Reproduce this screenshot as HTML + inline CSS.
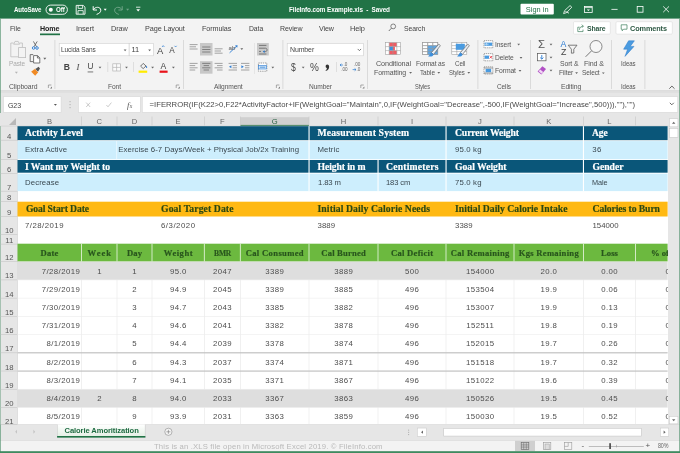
<!DOCTYPE html>
<html><head><meta charset="utf-8"><title>FileInfo.com Example.xls - Excel</title>
<style>
html,body{margin:0;padding:0;}
body{width:680px;height:453px;overflow:hidden;position:relative;background:#e6e6e6;font-family:'Liberation Sans', sans-serif;}
#w{position:absolute;left:0;top:0;width:680px;height:453px;overflow:hidden;will-change:transform;}
#w div,#w span,#w svg{position:absolute;display:block;}
#w span{white-space:pre;}
#w svg{overflow:visible;}
</style></head><body><div id="w">
<svg style="left:0;top:0" width="680" height="453" viewBox="0 0 680 453" shape-rendering="geometricPrecision"><defs><linearGradient id="g0" x1="0" y1="0" x2="0" y2="1"><stop offset="0" stop-color="#ffffff"/><stop offset="1" stop-color="#e2eee3"/></linearGradient></defs>
<rect x="0.00" y="0.00" width="680.00" height="19.20" fill="#217346"/>
<rect x="520.50" y="3.80" width="33.30" height="10.80" fill="#fff" rx="1.0"/>
<rect x="0.00" y="18.60" width="680.00" height="72.00" fill="#f3f3f3"/>
<rect x="0.00" y="90.20" width="680.00" height="1.20" fill="#d9d9d9"/>
<rect x="0.00" y="91.40" width="680.00" height="1.40" fill="#dedede"/>
<rect x="40.00" y="33.50" width="20.00" height="1.70" fill="#217346"/>
<rect x="573.50" y="21.70" width="36.80" height="12.40" fill="#fff" stroke="#dcdcdc" stroke-width="0.60" rx="1.0"/>
<rect x="616.00" y="21.70" width="56.30" height="12.40" fill="#fff" stroke="#dcdcdc" stroke-width="0.60" rx="1.0"/>
<rect x="54.50" y="40.00" width="0.80" height="49.00" fill="#d4d4d4"/>
<rect x="183.00" y="40.00" width="0.80" height="49.00" fill="#d4d4d4"/>
<rect x="282.50" y="40.00" width="0.80" height="49.00" fill="#d4d4d4"/>
<rect x="367.00" y="40.00" width="0.80" height="49.00" fill="#d4d4d4"/>
<rect x="477.50" y="40.00" width="0.80" height="49.00" fill="#d4d4d4"/>
<rect x="530.00" y="40.00" width="0.80" height="49.00" fill="#d4d4d4"/>
<rect x="611.00" y="40.00" width="0.80" height="49.00" fill="#d4d4d4"/>
<rect x="644.50" y="40.00" width="0.80" height="49.00" fill="#d4d4d4"/>
<rect x="107.50" y="62.00" width="0.70" height="10.00" fill="#d4d4d4"/>
<rect x="133.00" y="62.00" width="0.70" height="10.00" fill="#d4d4d4"/>
<rect x="336.00" y="62.00" width="0.70" height="10.00" fill="#d4d4d4"/>
<rect x="254.20" y="43.00" width="0.70" height="31.00" fill="#dedede"/>
<rect x="59.20" y="43.50" width="69.90" height="12.30" fill="#fff" stroke="#d0d0d0" stroke-width="0.60"/>
<rect x="129.20" y="43.50" width="24.10" height="12.30" fill="#fff" stroke="#d0d0d0" stroke-width="0.60"/>
<rect x="87.60" y="71.60" width="5.60" height="0.70" fill="#444"/>
<rect x="159.60" y="70.60" width="8.00" height="2.20" fill="#e8121a"/>
<rect x="138.60" y="70.60" width="8.60" height="2.20" fill="#ffeb00"/>
<rect x="200.00" y="43.00" width="12.50" height="12.50" fill="#c8c8c8"/>
<rect x="200.00" y="61.20" width="12.50" height="12.50" fill="#c8c8c8"/>
<rect x="257.00" y="43.00" width="11.80" height="12.50" fill="#c8c8c8"/>
<rect x="287.20" y="43.50" width="76.10" height="12.30" fill="#fff" stroke="#d0d0d0" stroke-width="0.60"/>
<rect x="0.00" y="92.80" width="680.00" height="22.00" fill="#e6e6e6"/>
<rect x="3.55" y="96.75" width="57.50" height="15.50" fill="#fff" stroke="#d4d4d4" stroke-width="0.50"/>
<rect x="78.55" y="96.75" width="61.70" height="15.50" fill="#fff" stroke="#d4d4d4" stroke-width="0.50"/>
<rect x="142.25" y="96.75" width="535.50" height="15.50" fill="#fff" stroke="#d4d4d4" stroke-width="0.50"/>
<rect x="69.60" y="101.00" width="0.90" height="1.20" fill="#aaa"/>
<rect x="69.60" y="104.00" width="0.90" height="1.20" fill="#aaa"/>
<rect x="69.60" y="107.00" width="0.90" height="1.20" fill="#aaa"/>
<rect x="0.00" y="424.30" width="680.00" height="16.40" fill="#e6e6e6"/>
<rect x="0.00" y="424.30" width="680.00" height="0.60" fill="#c9c9c9"/>
<rect x="0.00" y="440.70" width="680.00" height="10.80" fill="#f3f3f3"/>
<rect x="0.00" y="440.50" width="680.00" height="0.50" fill="#d6d6d6"/>
<rect x="57.10" y="424.30" width="88.30" height="13.20" fill="#c8c8c8"/>
<rect x="57.60" y="424.30" width="87.30" height="13.20" fill="url(#g0)"/>
<rect x="57.10" y="436.00" width="88.30" height="1.60" fill="#217346"/>
<rect x="515.00" y="440.80" width="20.00" height="10.60" fill="#cfcfcf"/>
<rect x="588.80" y="446.00" width="55.00" height="0.60" fill="#999"/>
<rect x="609.20" y="443.20" width="1.80" height="5.80" fill="#555"/>
<rect x="616.40" y="444.80" width="0.60" height="2.60" fill="#999"/>
<rect x="417.25" y="428.05" width="9.00" height="8.30" fill="#fff" stroke="#c6c6c6" stroke-width="0.50"/>
<rect x="660.25" y="428.05" width="8.50" height="8.30" fill="#fff" stroke="#c6c6c6" stroke-width="0.50"/>
<rect x="443.75" y="428.35" width="197.50" height="7.70" fill="#fff" stroke="#c0c0c0" stroke-width="0.50"/>
<rect x="408.20" y="429.60" width="0.90" height="1.10" fill="#aaa"/>
<rect x="408.20" y="431.80" width="0.90" height="1.10" fill="#aaa"/>
<rect x="408.20" y="434.00" width="0.90" height="1.10" fill="#aaa"/>
<rect x="668.00" y="113.00" width="12.00" height="311.30" fill="#e6e6e6"/>
<rect x="669.45" y="118.75" width="8.50" height="8.10" fill="#fff" stroke="#c6c6c6" stroke-width="0.50"/>
<rect x="669.45" y="128.35" width="8.50" height="9.10" fill="#fff" stroke="#c0c0c0" stroke-width="0.50"/>
<rect x="669.45" y="416.35" width="8.50" height="7.50" fill="#fff" stroke="#c6c6c6" stroke-width="0.50"/>
<rect x="0.00" y="18.50" width="0.70" height="434.50" fill="#5f9a79"/>
<rect x="679.30" y="18.50" width="0.70" height="434.50" fill="#5f9a79"/>
<rect x="0.00" y="451.20" width="680.00" height="1.80" fill="#3f8a60"/>
<rect x="17.30" y="126.00" width="650.70" height="298.30" fill="#fff"/>
<rect x="0.00" y="113.00" width="668.00" height="13.00" fill="#e6e6e6"/>
<rect x="240.30" y="117.20" width="68.70" height="8.80" fill="#d0d0d0"/>
<rect x="240.30" y="124.90" width="68.70" height="1.20" fill="#3c8059"/>
<rect x="81.30" y="116.50" width="0.60" height="9.00" fill="#c6c6c6"/>
<rect x="116.70" y="116.50" width="0.60" height="9.00" fill="#c6c6c6"/>
<rect x="151.70" y="116.50" width="0.60" height="9.00" fill="#c6c6c6"/>
<rect x="204.00" y="116.50" width="0.60" height="9.00" fill="#c6c6c6"/>
<rect x="240.00" y="116.50" width="0.60" height="9.00" fill="#c6c6c6"/>
<rect x="308.70" y="116.50" width="0.60" height="9.00" fill="#c6c6c6"/>
<rect x="377.70" y="116.50" width="0.60" height="9.00" fill="#c6c6c6"/>
<rect x="445.70" y="116.50" width="0.60" height="9.00" fill="#c6c6c6"/>
<rect x="513.70" y="116.50" width="0.60" height="9.00" fill="#c6c6c6"/>
<rect x="583.10" y="116.50" width="0.60" height="9.00" fill="#c6c6c6"/>
<rect x="635.20" y="116.50" width="0.60" height="9.00" fill="#c6c6c6"/>
<rect x="0.70" y="126.00" width="16.60" height="298.30" fill="#e6e6e6"/>
<rect x="17.00" y="126.00" width="0.50" height="298.30" fill="#c9c9c9"/>
<rect x="0.70" y="125.80" width="668.00" height="0.50" fill="#c9c9c9"/>
<rect x="0.70" y="139.90" width="16.60" height="0.60" fill="#c6c6c6"/>
<rect x="0.70" y="159.30" width="16.60" height="0.60" fill="#c6c6c6"/>
<rect x="0.70" y="173.30" width="16.60" height="0.60" fill="#c6c6c6"/>
<rect x="0.70" y="190.90" width="16.60" height="0.60" fill="#c6c6c6"/>
<rect x="0.70" y="201.30" width="16.60" height="0.60" fill="#c6c6c6"/>
<rect x="0.70" y="216.10" width="16.60" height="0.60" fill="#c6c6c6"/>
<rect x="0.70" y="234.40" width="16.60" height="0.60" fill="#c6c6c6"/>
<rect x="0.70" y="243.80" width="16.60" height="0.60" fill="#c6c6c6"/>
<rect x="0.70" y="261.40" width="16.60" height="0.60" fill="#c6c6c6"/>
<rect x="0.70" y="279.62" width="16.60" height="0.60" fill="#c6c6c6"/>
<rect x="0.70" y="297.84" width="16.60" height="0.60" fill="#c6c6c6"/>
<rect x="0.70" y="316.06" width="16.60" height="0.60" fill="#c6c6c6"/>
<rect x="0.70" y="334.28" width="16.60" height="0.60" fill="#c6c6c6"/>
<rect x="0.70" y="352.50" width="16.60" height="0.60" fill="#c6c6c6"/>
<rect x="0.70" y="370.72" width="16.60" height="0.60" fill="#c6c6c6"/>
<rect x="0.70" y="388.94" width="16.60" height="0.60" fill="#c6c6c6"/>
<rect x="0.70" y="407.16" width="16.60" height="0.60" fill="#c6c6c6"/>
<rect x="0.70" y="424.00" width="16.60" height="0.60" fill="#c6c6c6"/>
<rect x="81.30" y="261.70" width="0.60" height="162.60" fill="#e6e6e6"/>
<rect x="116.70" y="261.70" width="0.60" height="162.60" fill="#e6e6e6"/>
<rect x="151.70" y="261.70" width="0.60" height="162.60" fill="#e6e6e6"/>
<rect x="204.00" y="261.70" width="0.60" height="162.60" fill="#e6e6e6"/>
<rect x="240.00" y="261.70" width="0.60" height="162.60" fill="#e6e6e6"/>
<rect x="308.70" y="261.70" width="0.60" height="162.60" fill="#e6e6e6"/>
<rect x="377.70" y="261.70" width="0.60" height="162.60" fill="#e6e6e6"/>
<rect x="445.70" y="261.70" width="0.60" height="162.60" fill="#e6e6e6"/>
<rect x="513.70" y="261.70" width="0.60" height="162.60" fill="#e6e6e6"/>
<rect x="583.10" y="261.70" width="0.60" height="162.60" fill="#e6e6e6"/>
<rect x="635.20" y="261.70" width="0.60" height="162.60" fill="#e6e6e6"/>
<rect x="17.50" y="126.20" width="650.10" height="14.00" fill="#0a5679"/>
<rect x="17.50" y="141.10" width="650.10" height="18.10" fill="#cdeefd"/>
<rect x="17.50" y="160.00" width="650.10" height="12.70" fill="#0a5679"/>
<rect x="17.50" y="173.70" width="650.10" height="17.40" fill="#cdeefd"/>
<rect x="17.50" y="201.70" width="650.10" height="14.80" fill="#ffb913"/>
<rect x="17.50" y="243.70" width="650.10" height="17.80" fill="#6cb93f"/>
<rect x="17.50" y="261.70" width="650.10" height="18.22" fill="#dedede"/>
<rect x="17.50" y="389.24" width="650.10" height="18.22" fill="#dedede"/>
<rect x="308.50" y="126.20" width="1.10" height="65.00" fill="#fff"/>
<rect x="445.50" y="126.20" width="1.10" height="65.00" fill="#fff"/>
<rect x="582.90" y="126.20" width="1.10" height="65.00" fill="#fff"/>
<rect x="377.50" y="159.60" width="1.10" height="31.60" fill="#fff"/>
<rect x="116.20" y="141.10" width="0.90" height="18.10" fill="#eaf8ff"/>
<rect x="81.20" y="243.70" width="0.80" height="17.80" fill="#eef7e8"/>
<rect x="116.60" y="243.70" width="0.80" height="17.80" fill="#eef7e8"/>
<rect x="151.60" y="243.70" width="0.80" height="17.80" fill="#eef7e8"/>
<rect x="203.90" y="243.70" width="0.80" height="17.80" fill="#eef7e8"/>
<rect x="239.90" y="243.70" width="0.80" height="17.80" fill="#eef7e8"/>
<rect x="308.60" y="243.70" width="0.80" height="17.80" fill="#eef7e8"/>
<rect x="377.60" y="243.70" width="0.80" height="17.80" fill="#eef7e8"/>
<rect x="445.60" y="243.70" width="0.80" height="17.80" fill="#eef7e8"/>
<rect x="513.60" y="243.70" width="0.80" height="17.80" fill="#eef7e8"/>
<rect x="583.00" y="243.70" width="0.80" height="17.80" fill="#eef7e8"/>
<rect x="635.10" y="243.70" width="0.80" height="17.80" fill="#eef7e8"/>
<rect x="17.50" y="279.62" width="650.10" height="0.60" fill="#ececec"/>
<rect x="17.50" y="297.84" width="650.10" height="0.60" fill="#ececec"/>
<rect x="17.50" y="316.06" width="650.10" height="0.60" fill="#ececec"/>
<rect x="17.50" y="334.28" width="650.10" height="0.60" fill="#ececec"/>
<rect x="17.50" y="352.50" width="650.10" height="0.60" fill="#ececec"/>
<rect x="17.50" y="370.72" width="650.10" height="0.60" fill="#ececec"/>
<rect x="17.50" y="388.94" width="650.10" height="0.60" fill="#ececec"/>
<rect x="17.50" y="407.16" width="650.10" height="0.60" fill="#ececec"/>
<rect x="17.50" y="352.40" width="650.10" height="0.90" fill="#b4b4b4"/>
<rect x="17.50" y="370.62" width="650.10" height="0.90" fill="#b4b4b4"/>
</svg>
<svg style="left:9px;top:117.5px;" width="7" height="7" viewBox="0 0 7 7"><path d="M7 0 L7 7 L0 7 Z" fill="#b8b8b8"/></svg>
<svg style="left:0;top:0;" width="680" height="453" viewBox="0 0 680 453"><rect x="46" y="5.1" width="21.4" height="9.2" rx="4.6" fill="none" stroke="#fff" stroke-width="0.9"/><circle cx="50.8" cy="9.7" r="2" fill="#fff"/><path d="M76.2 5.4 H83.2 L85 7.2 V14.2 H76.2 Z" fill="none" stroke="#fff" stroke-width="0.9"/><path d="M78.2 5.6 V8.4 H82.6 V5.6 M78 14 V10.6 H83.2 V14" fill="none" stroke="#fff" stroke-width="0.8"/><path d="M93.2 6.2 V10 H97 M93.4 9.8 C95 6.4 100.6 6.4 100.8 10.2 C100.8 12.4 99 13.6 96.6 14.4" fill="none" stroke="#fff" stroke-width="1"/><path d="M103.7 8.85 L106.7 8.85 L105.2 10.649999999999999 Z" fill="#fff"/><path d="M122.2 6.2 V10 H118.4 M122 9.8 C120.4 6.4 114.8 6.4 114.6 10.2 C114.6 12.4 116.4 13.6 118.8 14.4" fill="none" stroke="#6fa487" stroke-width="1"/><path d="M126.1 8.85 L129.1 8.85 L127.6 10.649999999999999 Z" fill="#6fa487"/><path d="M136 7.2 H140.4" stroke="#fff" stroke-width="0.8"/><path d="M136.29999999999998 9.25 L140.1 9.25 L138.2 11.53 Z" fill="#fff"/><path d="M563.6 13.6 L564.6 10.6 L570 5.6 L571.8 7.2 L566.6 12.6 Z M565.4 11.4 L569 13.2" fill="none" stroke="#fff" stroke-width="0.8"/><rect x="584.6" y="6.4" width="7.6" height="6" fill="none" stroke="#fff" stroke-width="0.8"/><path d="M584.6 7.6 H592.2" stroke="#fff" stroke-width="0.8"/><path d="M586.8 9.4 L588.4 11 L590 9.4 Z" fill="#fff"/><path d="M611.4 9.4 H617.6" stroke="#fff" stroke-width="0.8"/><rect x="637.2" y="6.4" width="5.8" height="5.8" fill="none" stroke="#fff" stroke-width="0.8"/><path d="M663.2 6.4 L669 12.2 M669 6.4 L663.2 12.2" stroke="#fff" stroke-width="0.8"/><circle cx="393.2" cy="26.4" r="2.4" fill="none" stroke="#555" stroke-width="0.7"/><path d="M391.4 28.2 L388.8 31" stroke="#555" stroke-width="0.8"/><path d="M579.6 27.2 H577.8 V31.6 H583 V29.6" fill="none" stroke="#3b7d5a" stroke-width="0.7"/><path d="M579.4 29.8 C579.6 27.4 581 26.2 583.2 26.2 M581.8 24.6 L583.4 26.2 L581.8 27.8" fill="none" stroke="#3b7d5a" stroke-width="0.7"/><path d="M621.2 24.8 H627 V29.2 H623.6 L622.2 30.8 V29.2 H621.2 Z" fill="none" stroke="#3b7d5a" stroke-width="0.7"/><path d="M13.4 43 H10.8 V56.8 H18.4 M19.8 43 H22.4 V47.4" fill="none" stroke="#bdbdbd" stroke-width="0.8"/><path d="M13.6 44.2 L15 41.4 H18.2 L19.6 44.2 Z" fill="none" stroke="#bdbdbd" stroke-width="0.8"/><rect x="18.6" y="47.6" width="7" height="10" fill="#f3f3f3" stroke="#bdbdbd" stroke-width="0.8"/><path d="M14.899999999999999 71.85 L17.9 71.85 L16.4 73.64999999999999 Z" fill="#b5b5b5"/><path d="M33.4 41.4 L36.6 46.8 M37.2 41.4 L34 46.8" stroke="#555" stroke-width="0.8" fill="none"/><circle cx="33.6" cy="48" r="1.3" fill="none" stroke="#2b7cd3" stroke-width="0.9"/><circle cx="37" cy="48" r="1.3" fill="none" stroke="#2b7cd3" stroke-width="0.9"/><path d="M33.2 54.6 H30.2 V61.6 H33.2" fill="none" stroke="#555" stroke-width="0.8"/><path d="M33.6 55.6 H37.6 L39.8 57.8 V63 H33.6 Z M37.4 55.8 V58 H39.6" fill="#fff" stroke="#555" stroke-width="0.8"/><path d="M43.3 57.85 L46.3 57.85 L44.8 59.65 Z" fill="#666"/><path d="M31 71.4 L35 68.6 L38.2 72.2 L35.2 75.8 Z" fill="#f08a24"/><path d="M31 71.4 L35 68.6 L38.2 72.2" fill="none" stroke="#fff" stroke-width="0.5"/><path d="M35.4 69 L38.6 66.8 L40 68.4 L38 71.8 Z" fill="#555"/><path d="M48.4 88 L48.4 85 L51.4 85" stroke="#777" stroke-width="0.6" fill="none"/><path d="M52.0 86.6 L52.0 88.6 L50.0 88.6 Z" fill="#777"/><path d="M123.69999999999999 49.5 L126.5 49.5 L125.1 51.18 Z" fill="#666"/><path d="M148.2 49.5 L151.0 49.5 L149.6 51.18 Z" fill="#666"/><path d="M162 47 L163.2 45.6 L164.4 47" fill="none" stroke="#2b7cd3" stroke-width="0.7"/><path d="M174.6 45.8 L175.6 47 L176.6 45.8" fill="none" stroke="#2b7cd3" stroke-width="0.7"/><path d="M98.6 66.7 L101.4 66.7 L100 68.38000000000001 Z" fill="#666"/><rect x="112.8" y="63.8" width="7.6" height="7.2" fill="#fbfbfb" stroke="#b5b5b5" stroke-width="0.7"/><path d="M116.6 63.8 V71 M112.8 67.4 H120.4" stroke="#b5b5b5" stroke-width="0.7"/><path d="M125.1 66.7 L127.9 66.7 L126.5 68.38000000000001 Z" fill="#666"/><path d="M140.6 66.2 L143.2 63.4 L146 66 L143.2 68.6 Z" fill="#f3f3f3" stroke="#555" stroke-width="0.8"/><path d="M146.4 65.4 C147.4 66.8 147.4 67.8 146.6 68 C145.8 67.8 145.8 66.8 146.4 65.4 Z" fill="#2b7cd3"/><path d="M151.2 66.7 L154.0 66.7 L152.6 68.38000000000001 Z" fill="#666"/><path d="M172.0 66.7 L174.8 66.7 L173.4 68.38000000000001 Z" fill="#666"/><path d="M176.2 88 L176.2 85 L179.2 85" stroke="#777" stroke-width="0.6" fill="none"/><path d="M179.79999999999998 86.6 L179.79999999999998 88.6 L177.79999999999998 88.6 Z" fill="#777"/><path d="M189.6 44.6 H197.6" stroke="#707070" stroke-width="0.62"/><path d="M189.6 46.8 H196" stroke="#707070" stroke-width="0.62"/><path d="M189.6 49.0 H197.6" stroke="#707070" stroke-width="0.62"/><path d="M202.2 47 H210.4" stroke="#555" stroke-width="0.62"/><path d="M202.2 49.5 H210.4" stroke="#555" stroke-width="0.62"/><path d="M202.2 52 H210.4" stroke="#555" stroke-width="0.62"/><path d="M214.6 48.8 H222.6" stroke="#707070" stroke-width="0.62"/><path d="M214.6 51 H221" stroke="#707070" stroke-width="0.62"/><path d="M214.6 53.2 H222.6" stroke="#707070" stroke-width="0.62"/><path d="M189.6 63.4 H197.6" stroke="#707070" stroke-width="0.62"/><path d="M189.6 65.6 H195.2" stroke="#707070" stroke-width="0.62"/><path d="M189.6 67.8 H197.6" stroke="#707070" stroke-width="0.62"/><path d="M189.6 70 H195.2" stroke="#707070" stroke-width="0.62"/><path d="M202.2 63.4 H210.4" stroke="#555" stroke-width="0.62"/><path d="M203.6 65.6 H209" stroke="#555" stroke-width="0.62"/><path d="M202.2 67.8 H210.4" stroke="#555" stroke-width="0.62"/><path d="M203.6 70 H209" stroke="#555" stroke-width="0.62"/><path d="M214.6 63.4 H222.6" stroke="#707070" stroke-width="0.62"/><path d="M217 65.6 H222.6" stroke="#707070" stroke-width="0.62"/><path d="M214.6 67.8 H222.6" stroke="#707070" stroke-width="0.62"/><path d="M217 70 H222.6" stroke="#707070" stroke-width="0.62"/><path d="M229.6 52.8 L236.8 46" stroke="#2b7cd3" stroke-width="0.9"/><path d="M235 45.4 L237.6 45.2 L237.2 47.8 Z" fill="#2b7cd3"/><path d="M240.4 48.3 L243.20000000000002 48.3 L241.8 49.98 Z" fill="#666"/><path d="M228.6 63.4 H237.0" stroke="#707070" stroke-width="0.62"/><path d="M232.6 65.6 H237.0" stroke="#707070" stroke-width="0.62"/><path d="M232.6 67.8 H237.0" stroke="#707070" stroke-width="0.62"/><path d="M228.6 70 H237.0" stroke="#707070" stroke-width="0.62"/><path d="M241 63.4 H249.4" stroke="#707070" stroke-width="0.62"/><path d="M245 65.6 H249.4" stroke="#707070" stroke-width="0.62"/><path d="M245 67.8 H249.4" stroke="#707070" stroke-width="0.62"/><path d="M241 70 H249.4" stroke="#707070" stroke-width="0.62"/><path d="M231.4 65.2 L229 66.7 L231.4 68.2 Z" fill="#2b7cd3"/><path d="M241.4 65.2 L243.8 66.7 L241.4 68.2 Z" fill="#2b7cd3"/><path d="M259 45.4 H266.4 M259 48.2 H265.4 C267.6 48.2 267.6 51.6 265.4 51.6 H263.4 M259 51.4 H261 M259 54 H266.4" stroke="#555" stroke-width="0.7" fill="none"/><path d="M264.6 50.2 L262.8 51.6 L264.6 53 Z" fill="#2b7cd3"/><rect x="258.4" y="63" width="8.4" height="8.2" fill="#fff" stroke="#777" stroke-width="0.7" stroke-dasharray="1.4 0.8"/><rect x="258.6" y="65.4" width="8" height="3.6" fill="#cfe3f7" stroke="#2b7cd3" stroke-width="0.6"/><path d="M260 67.2 H265.2" stroke="#2b7cd3" stroke-width="0.7"/><path d="M271.40000000000003 66.7 L274.2 66.7 L272.8 68.38000000000001 Z" fill="#666"/><path d="M276.4 88 L276.4 85 L279.4 85" stroke="#777" stroke-width="0.6" fill="none"/><path d="M280.0 86.6 L280.0 88.6 L278.0 88.6 Z" fill="#777"/><path d="M357.7 48.949999999999996 L359.4 50.65 L361.09999999999997 48.949999999999996" stroke="#555" stroke-width="0.8" fill="none"/><path d="M301.8 66.7 L304.59999999999997 66.7 L303.2 68.38000000000001 Z" fill="#666"/><path d="M343 65 H340 M341.4 63.8 L340 65 L341.4 66.2" stroke="#2b7cd3" stroke-width="0.7" fill="none"/><path d="M352.6 69.6 H356 M354.6 68.4 L356 69.6 L354.6 70.8" stroke="#2b7cd3" stroke-width="0.7" fill="none"/><path d="M360.8 88 L360.8 85 L363.8 85" stroke="#777" stroke-width="0.6" fill="none"/><path d="M364.40000000000003 86.6 L364.40000000000003 88.6 L362.40000000000003 88.6 Z" fill="#777"/><path d="M327.3 64.6 C329.4 64.6 329.6 67.6 328.6 69 C327.8 70.2 326.6 70.9 325.2 71.1 C326.4 70.2 326.9 69.2 326.9 68.1 C325.2 68 325.2 64.6 327.3 64.6 Z" fill="#333"/><rect x="385.4" y="42.6" width="15.2" height="12" fill="#fff"/><rect x="389.2" y="42.6" width="7.6" height="4.0" fill="#ef5b63"/><rect x="389.2" y="50.6" width="7.6" height="4.0" fill="#ef5b63"/><rect x="389.2" y="46.6" width="3.8" height="4.0" fill="#3d8fdc"/><rect x="393.0" y="46.6" width="1.9" height="4.0" fill="#ef5b63"/><rect x="385.4" y="42.6" width="15.2" height="12" fill="none" stroke="#9a9a9a" stroke-width="0.55"/><path d="M389.20 42.6 V54.6" stroke="#9a9a9a" stroke-width="0.55"/><path d="M393.00 42.6 V54.6" stroke="#9a9a9a" stroke-width="0.55"/><path d="M396.80 42.6 V54.6" stroke="#9a9a9a" stroke-width="0.55"/><path d="M385.4 46.60 H400.59999999999997" stroke="#9a9a9a" stroke-width="0.55"/><path d="M385.4 50.60 H400.59999999999997" stroke="#9a9a9a" stroke-width="0.55"/><rect x="422.6" y="42.6" width="15.2" height="12" fill="#fff" stroke="#9a9a9a" stroke-width="0.55"/><path d="M427.67 42.6 V54.6" stroke="#9a9a9a" stroke-width="0.55"/><path d="M432.73 42.6 V54.6" stroke="#9a9a9a" stroke-width="0.55"/><path d="M422.6 45.60 H437.8" stroke="#9a9a9a" stroke-width="0.55"/><path d="M422.6 48.60 H437.8" stroke="#9a9a9a" stroke-width="0.55"/><path d="M422.6 51.60 H437.8" stroke="#9a9a9a" stroke-width="0.55"/><rect x="427.6666666666667" y="45.6" width="10.133333333333333" height="9.0" fill="#4a9be0" opacity="0.9"/><rect x="422.6" y="42.6" width="15.2" height="12" fill="none" stroke="#9a9a9a" stroke-width="0.55"/><path d="M427.67 42.6 V54.6" stroke="#9a9a9a" stroke-width="0.55"/><path d="M432.73 42.6 V54.6" stroke="#9a9a9a" stroke-width="0.55"/><path d="M422.6 45.60 H437.8" stroke="#9a9a9a" stroke-width="0.55"/><path d="M422.6 48.60 H437.8" stroke="#9a9a9a" stroke-width="0.55"/><path d="M422.6 51.60 H437.8" stroke="#9a9a9a" stroke-width="0.55"/><path d="M431.4 52.6 L438.79999999999995 44.2 L440.4 45.6 L433.59999999999997 54.4 Z" fill="#e8eef5" stroke="#555" stroke-width="0.6"/><path d="M428.0 56.2 C429.79999999999995 55.800000000000004 429.79999999999995 53.2 431.4 52.6 L433.59999999999997 54.4 C432.79999999999995 56.800000000000004 429.79999999999995 57.0 428.0 56.2 Z" fill="#3d8fdc"/><rect x="451.8" y="42.6" width="15" height="12" fill="#fff" stroke="#9a9a9a" stroke-width="0.55"/><path d="M456.80 42.6 V54.6" stroke="#9a9a9a" stroke-width="0.55"/><path d="M461.80 42.6 V54.6" stroke="#9a9a9a" stroke-width="0.55"/><path d="M451.8 45.60 H466.8" stroke="#9a9a9a" stroke-width="0.55"/><path d="M451.8 48.60 H466.8" stroke="#9a9a9a" stroke-width="0.55"/><path d="M451.8 51.60 H466.8" stroke="#9a9a9a" stroke-width="0.55"/><rect x="455.8" y="43.800000000000004" width="9.0" height="6.0" fill="#4a9be0"/><path d="M460.4 52.6 L467.79999999999995 44.2 L469.4 45.6 L462.59999999999997 54.4 Z" fill="#e8eef5" stroke="#555" stroke-width="0.6"/><path d="M457.0 56.2 C458.79999999999995 55.800000000000004 458.79999999999995 53.2 460.4 52.6 L462.59999999999997 54.4 C461.79999999999995 56.800000000000004 458.79999999999995 57.0 457.0 56.2 Z" fill="#3d8fdc"/><path d="M409.20000000000005 72.1 L412.0 72.1 L410.6 73.78 Z" fill="#666"/><path d="M437.40000000000003 72.1 L440.2 72.1 L438.8 73.78 Z" fill="#666"/><path d="M467.40000000000003 72.1 L470.2 72.1 L468.8 73.78 Z" fill="#666"/><rect x="484" y="40.6" width="8.8" height="7.2" fill="#fff" stroke="#666" stroke-width="0.6" stroke-dasharray="1.2 0.7"/><rect x="484.6" y="42.6" width="7.6" height="3.2" fill="#4a9be0"/><path d="M488.6 44.2 H485.6 M486.8 43.2 L485.6 44.2 L486.8 45.2" stroke="#fff" stroke-width="0.6" fill="none"/><rect x="484" y="53.6" width="8.8" height="7.2" fill="#fff" stroke="#666" stroke-width="0.6" stroke-dasharray="1.2 0.7"/><rect x="484.6" y="55.6" width="4.4" height="3.2" fill="#4a9be0"/><path d="M489.6 56.0 L492 58.4 M492 56.0 L489.6 58.4" stroke="#e8323c" stroke-width="0.8"/><rect x="484" y="66.8" width="8.8" height="7.2" fill="#fff" stroke="#666" stroke-width="0.6" stroke-dasharray="1.2 0.7"/><rect x="485.6" y="68.8" width="5.6" height="3.4" fill="#4a9be0"/><path d="M484 68.0 H492.8 M484 73.0 H492.8" stroke="#555" stroke-width="0.6"/><path d="M517.3000000000001 43.8 L520.1 43.8 L518.7 45.48 Z" fill="#666"/><path d="M519.6 57.0 L522.4 57.0 L521 58.68 Z" fill="#666"/><path d="M518.6 70.1 L521.4 70.1 L520 71.78 Z" fill="#666"/><path d="M549.6 43.8 L552.4 43.8 L551 45.48 Z" fill="#666"/><path d="M549.6 56.699999999999996 L552.4 56.699999999999996 L551 58.379999999999995 Z" fill="#666"/><path d="M549.6 69.7 L552.4 69.7 L551 71.38000000000001 Z" fill="#666"/><rect x="537.6" y="53.6" width="8.4" height="7.2" fill="#fff" stroke="#555" stroke-width="0.7"/><path d="M541.8 55 V59 M540.2 57.6 L541.8 59.2 L543.4 57.6" stroke="#2b7cd3" stroke-width="0.9" fill="none"/><path d="M537.6 71.6 L542.4 66.2 L546 69 L541.4 74.6 Z" fill="#b14fc5"/><path d="M538.6 71.2 L541.6 73.8 L543.2 72 L540.2 69.4 Z" fill="#f1d9f5"/><path d="M568.2 45.2 H577 L573.8 49.2 V53 L571.4 53.2 V49.2 Z" fill="#f3f3f3" stroke="#555" stroke-width="0.75"/><path d="M575.2 72.2 L578.0 72.2 L576.6 73.88000000000001 Z" fill="#666"/><circle cx="596" cy="46.5" r="6" fill="#f7f7f7" stroke="#666" stroke-width="0.75"/><path d="M591.6 50.8 L585.6 56.8" stroke="#666" stroke-width="0.9"/><path d="M601.9 72.39999999999999 L604.6999999999999 72.39999999999999 L603.3 74.08 Z" fill="#666"/><path d="M628.6 40.8 L634.4 40.8 L630.2 46.4 L634 46.4 L625 56.4 L627.6 49.2 L623.6 49.2 Z" fill="#4a9be0" stroke="#2a78c8" stroke-width="0.5"/><path d="M669.3 88.7 L671.9 86.1 L674.5 88.7" stroke="#555" stroke-width="0.9" fill="none"/><path d="M53.9 104.05 L56.9 104.05 L55.4 105.85 Z" fill="#555"/><path d="M86.2 102.6 L90.2 107 M90.2 102.6 L86.2 107" stroke="#b4b4b4" stroke-width="0.7"/><path d="M106.4 105 L108 106.8 L111.4 102.6" stroke="#b4b4b4" stroke-width="0.7" fill="none"/><path d="M669.8 102.8 L671.8 104.8 L673.8 102.8" stroke="#555" stroke-width="0.9" fill="none"/><path d="M17 429.8 L15.2 431.8 L17 433.8 Z" fill="#c4c4c4"/><path d="M33.4 429.8 L35.2 431.8 L33.4 433.8 Z" fill="#c4c4c4"/><circle cx="168.4" cy="431.8" r="3.6" fill="#f5f5f5" stroke="#888" stroke-width="0.6"/><path d="M166.4 431.8 H170.4 M168.4 429.8 V433.8" stroke="#777" stroke-width="0.6"/><path d="M423 430.6 L421 432.2 L423 433.8 Z" fill="#666"/><path d="M663.6 430.6 L665.6 432.2 L663.6 433.8 Z" fill="#666"/><path d="M672 123.8 L673.7 121.8 L675.4 123.8 Z" fill="#666"/><path d="M672 419.2 L673.7 421.2 L675.4 419.2 Z" fill="#666"/><rect x="521.2" y="442.6" width="7.6" height="6.8" fill="none" stroke="#666" stroke-width="0.6"/><path d="M523.7 442.6 V449.4 M526.3 442.6 V449.4 M521.2 444.9 H528.8 M521.2 447.1 H528.8" stroke="#666" stroke-width="0.5"/><rect x="543.4" y="442.6" width="7.4" height="6.8" fill="none" stroke="#999" stroke-width="0.6"/><rect x="545" y="444" width="4.2" height="5.4" fill="#ddd" stroke="#999" stroke-width="0.5"/><rect x="564.4" y="442.6" width="7.4" height="6.8" fill="none" stroke="#999" stroke-width="0.6"/><path d="M564.4 446.4 H568.2 V442.6" stroke="#999" stroke-width="0.6" fill="none"/></svg>
<span style="left:13.50px;top:4.10px;font:normal bold 7.6px/11px 'Liberation Sans', sans-serif;color:#fff;letter-spacing:-0.120px;transform:scaleX(0.8043);transform-origin:0 50%;">AutoSave</span>
<span style="left:289.00px;top:3.90px;font:normal bold 7.6px/11px 'Liberation Sans', sans-serif;color:#fff;letter-spacing:-0.120px;transform:scaleX(0.8408);transform-origin:0 50%;">FileInfo.com Example.xls  -  Saved</span>
<span style="left:525.70px;top:3.90px;font:normal normal 7.4px/11px 'Liberation Sans', sans-serif;color:#217346;letter-spacing:0.065px;">Sign in</span>
<span style="left:10.00px;top:22.50px;font:normal normal 7.9px/11px 'Liberation Sans', sans-serif;color:#444;letter-spacing:-0.120px;transform:scaleX(0.8739);transform-origin:0 50%;">File</span>
<span style="left:40.00px;top:22.50px;font:normal bold 7.9px/11px 'Liberation Sans', sans-serif;color:#222;letter-spacing:-0.120px;transform:scaleX(0.9037);transform-origin:0 50%;">Home</span>
<span style="left:75.80px;top:22.50px;font:normal normal 7.9px/11px 'Liberation Sans', sans-serif;color:#444;letter-spacing:-0.120px;transform:scaleX(0.9407);transform-origin:0 50%;">Insert</span>
<span style="left:110.80px;top:22.50px;font:normal normal 7.9px/11px 'Liberation Sans', sans-serif;color:#444;letter-spacing:-0.120px;transform:scaleX(0.9246);transform-origin:0 50%;">Draw</span>
<span style="left:144.50px;top:22.50px;font:normal normal 7.9px/11px 'Liberation Sans', sans-serif;color:#444;letter-spacing:-0.120px;transform:scaleX(0.9232);transform-origin:0 50%;">Page Layout</span>
<span style="left:202.00px;top:22.50px;font:normal normal 7.9px/11px 'Liberation Sans', sans-serif;color:#444;letter-spacing:-0.120px;transform:scaleX(0.9142);transform-origin:0 50%;">Formulas</span>
<span style="left:248.80px;top:22.50px;font:normal normal 7.9px/11px 'Liberation Sans', sans-serif;color:#444;letter-spacing:-0.120px;transform:scaleX(0.8705);transform-origin:0 50%;">Data</span>
<span style="left:280.00px;top:22.50px;font:normal normal 7.9px/11px 'Liberation Sans', sans-serif;color:#444;letter-spacing:-0.120px;transform:scaleX(0.8902);transform-origin:0 50%;">Review</span>
<span style="left:318.80px;top:22.50px;font:normal normal 7.9px/11px 'Liberation Sans', sans-serif;color:#444;letter-spacing:-0.120px;transform:scaleX(0.9031);transform-origin:0 50%;">View</span>
<span style="left:349.50px;top:22.50px;font:normal normal 7.9px/11px 'Liberation Sans', sans-serif;color:#444;letter-spacing:-0.120px;transform:scaleX(0.9449);transform-origin:0 50%;">Help</span>
<span style="left:403.80px;top:22.50px;font:normal normal 7.9px/11px 'Liberation Sans', sans-serif;color:#444;letter-spacing:-0.120px;transform:scaleX(0.8683);transform-origin:0 50%;">Search</span>
<span style="left:586.80px;top:22.50px;font:normal bold 7.6px/11px 'Liberation Sans', sans-serif;color:#2f5a45;letter-spacing:-0.120px;transform:scaleX(0.9065);transform-origin:0 50%;">Share</span>
<span style="left:630.00px;top:22.50px;font:normal bold 7.6px/11px 'Liberation Sans', sans-serif;color:#2f5a45;letter-spacing:-0.120px;transform:scaleX(0.9633);transform-origin:0 50%;">Comments</span>
<span style="left:9.00px;top:80.70px;font:normal normal 7.4px/11px 'Liberation Sans', sans-serif;color:#555;letter-spacing:-0.120px;transform:scaleX(0.9289);transform-origin:0 50%;">Clipboard</span>
<span style="left:107.50px;top:80.70px;font:normal normal 7.4px/11px 'Liberation Sans', sans-serif;color:#555;letter-spacing:-0.120px;transform:scaleX(0.9005);transform-origin:0 50%;">Font</span>
<span style="left:213.80px;top:80.70px;font:normal normal 7.4px/11px 'Liberation Sans', sans-serif;color:#555;letter-spacing:-0.120px;transform:scaleX(0.8993);transform-origin:0 50%;">Alignment</span>
<span style="left:309.00px;top:80.70px;font:normal normal 7.4px/11px 'Liberation Sans', sans-serif;color:#555;letter-spacing:-0.120px;transform:scaleX(0.8951);transform-origin:0 50%;">Number</span>
<span style="left:415.00px;top:80.70px;font:normal normal 7.4px/11px 'Liberation Sans', sans-serif;color:#555;letter-spacing:-0.120px;transform:scaleX(0.7676);transform-origin:0 50%;">Styles</span>
<span style="left:497.00px;top:80.70px;font:normal normal 7.4px/11px 'Liberation Sans', sans-serif;color:#555;letter-spacing:-0.120px;transform:scaleX(0.8773);transform-origin:0 50%;">Cells</span>
<span style="left:560.80px;top:80.70px;font:normal normal 7.4px/11px 'Liberation Sans', sans-serif;color:#555;letter-spacing:-0.120px;transform:scaleX(0.9228);transform-origin:0 50%;">Editing</span>
<span style="left:621.00px;top:80.70px;font:normal normal 7.4px/11px 'Liberation Sans', sans-serif;color:#555;letter-spacing:-0.120px;transform:scaleX(0.8232);transform-origin:0 50%;">Ideas</span>
<span style="left:9.00px;top:58.30px;font:normal normal 7.4px/11px 'Liberation Sans', sans-serif;color:#aaa;letter-spacing:-0.120px;transform:scaleX(0.8683);transform-origin:0 50%;">Paste</span>
<span style="left:61.30px;top:44.30px;font:normal normal 7.6px/11px 'Liberation Sans', sans-serif;color:#444;letter-spacing:-0.120px;transform:scaleX(0.8547);transform-origin:0 50%;">Lucida Sans</span>
<span style="left:131.40px;top:44.30px;font:normal normal 7.4px/11px 'Liberation Sans', sans-serif;color:#444;">11</span>
<span style="left:63.80px;top:61.20px;font:normal bold 8.6px/12px 'Liberation Sans', sans-serif;color:#444;">B</span>
<span style="left:76.60px;top:61.20px;font:italic normal 8.6px/12px 'Liberation Serif', serif;color:#444;">I</span>
<span style="left:87.60px;top:61.00px;font:normal normal 8.2px/12px 'Liberation Sans', sans-serif;color:#444;">U</span>
<span style="left:157.00px;top:43.50px;font:normal normal 9.4px/13px 'Liberation Sans', sans-serif;color:#444;">A</span>
<span style="left:169.20px;top:44.60px;font:normal normal 8.2px/12px 'Liberation Sans', sans-serif;color:#444;">A</span>
<span style="left:160.60px;top:59.80px;font:normal normal 8.6px/12px 'Liberation Sans', sans-serif;color:#444;">A</span>
<span style="left:289.60px;top:44.30px;font:normal normal 7.6px/11px 'Liberation Sans', sans-serif;color:#444;letter-spacing:-0.120px;transform:scaleX(0.9161);transform-origin:0 50%;">Number</span>
<span style="left:290.70px;top:59.70px;font:normal normal 10.8px/15px 'Liberation Sans', sans-serif;color:#4a4a4a;transform:scaleX(0.8000);transform-origin:0 50%;">$</span>
<span style="left:310.00px;top:61.10px;font:normal normal 10.4px/14px 'Liberation Sans', sans-serif;color:#4a4a4a;transform:scaleX(0.9600);transform-origin:0 50%;">%</span>
<span style="left:375.80px;top:58.30px;font:normal normal 7.4px/11px 'Liberation Sans', sans-serif;color:#555;letter-spacing:-0.120px;transform:scaleX(0.9781);transform-origin:0 50%;">Conditional</span>
<span style="left:374.00px;top:67.30px;font:normal normal 7.4px/11px 'Liberation Sans', sans-serif;color:#555;letter-spacing:-0.120px;transform:scaleX(0.9402);transform-origin:0 50%;">Formatting</span>
<span style="left:416.00px;top:58.30px;font:normal normal 7.4px/11px 'Liberation Sans', sans-serif;color:#555;letter-spacing:-0.120px;transform:scaleX(0.8977);transform-origin:0 50%;">Format as</span>
<span style="left:420.20px;top:67.30px;font:normal normal 7.4px/11px 'Liberation Sans', sans-serif;color:#555;letter-spacing:-0.120px;transform:scaleX(0.8725);transform-origin:0 50%;">Table</span>
<span style="left:454.50px;top:58.30px;font:normal normal 7.4px/11px 'Liberation Sans', sans-serif;color:#555;letter-spacing:-0.120px;transform:scaleX(0.8485);transform-origin:0 50%;">Cell</span>
<span style="left:448.50px;top:67.30px;font:normal normal 7.4px/11px 'Liberation Sans', sans-serif;color:#555;letter-spacing:-0.120px;transform:scaleX(0.8086);transform-origin:0 50%;">Styles</span>
<span style="left:494.80px;top:38.90px;font:normal normal 7.4px/11px 'Liberation Sans', sans-serif;color:#555;letter-spacing:-0.120px;transform:scaleX(0.9058);transform-origin:0 50%;">Insert</span>
<span style="left:494.80px;top:52.10px;font:normal normal 7.4px/11px 'Liberation Sans', sans-serif;color:#555;letter-spacing:-0.120px;transform:scaleX(0.9001);transform-origin:0 50%;">Delete</span>
<span style="left:494.80px;top:65.30px;font:normal normal 7.4px/11px 'Liberation Sans', sans-serif;color:#555;letter-spacing:-0.120px;transform:scaleX(0.9208);transform-origin:0 50%;">Format</span>
<span style="left:538.00px;top:36.40px;font:normal normal 11.4px/16px 'Liberation Sans', sans-serif;color:#555;">Σ</span>
<span style="left:559.50px;top:58.30px;font:normal normal 7.4px/11px 'Liberation Sans', sans-serif;color:#555;letter-spacing:-0.120px;transform:scaleX(0.9275);transform-origin:0 50%;">Sort &amp;</span>
<span style="left:558.70px;top:67.30px;font:normal normal 7.4px/11px 'Liberation Sans', sans-serif;color:#555;letter-spacing:-0.120px;transform:scaleX(0.9029);transform-origin:0 50%;">Filter</span>
<span style="left:583.80px;top:58.30px;font:normal normal 7.4px/11px 'Liberation Sans', sans-serif;color:#555;letter-spacing:-0.120px;transform:scaleX(0.9627);transform-origin:0 50%;">Find &amp;</span>
<span style="left:582.00px;top:67.30px;font:normal normal 7.4px/11px 'Liberation Sans', sans-serif;color:#555;letter-spacing:-0.120px;transform:scaleX(0.8874);transform-origin:0 50%;">Select</span>
<span style="left:621.00px;top:58.30px;font:normal normal 7.4px/11px 'Liberation Sans', sans-serif;color:#555;letter-spacing:-0.120px;transform:scaleX(0.8232);transform-origin:0 50%;">Ideas</span>
<span style="left:560.60px;top:37.70px;font:normal normal 8.8px/13px 'Liberation Sans', sans-serif;color:#2b7cd3;">A</span>
<span style="left:560.90px;top:46.20px;font:normal normal 8.8px/13px 'Liberation Sans', sans-serif;color:#444;">Z</span>
<span style="left:7.50px;top:99.50px;font:normal normal 7.7px/11px 'Liberation Sans', sans-serif;color:#444;letter-spacing:-0.120px;transform:scaleX(0.9166);transform-origin:0 50%;">G23</span>
<span style="left:149.50px;top:99.30px;font:normal normal 7.7px/11px 'Liberation Sans', sans-serif;color:#4a4a4a;letter-spacing:0.018px;">=IFERROR(IF(K22&gt;0,F22*ActivityFactor+IF(WeightGoal=&quot;Maintain&quot;,0,IF(WeightGoal=&quot;Decrease&quot;,-500,IF(WeightGoal=&quot;Increase&quot;,500))),&quot;&quot;),&quot;&quot;)</span>
<span style="left:127.00px;top:98.80px;font:italic normal 8.6px/12px 'Liberation Serif', serif;color:#555;">f</span>
<span style="left:129.80px;top:101.70px;font:italic normal 5.6px/9px 'Liberation Serif', serif;color:#555;">x</span>
<span style="left:64.50px;top:425.10px;font:normal bold 7.6px/11px 'Liberation Sans', sans-serif;color:#1e6b41;letter-spacing:-0.090px;">Calorie Amoritization</span>
<span style="left:154.00px;top:440.90px;font:normal normal 7.7px/11px 'Liberation Sans', sans-serif;color:#b9b9b9;letter-spacing:0.157px;">This is an .XLS file open in Microsoft Excel 2019. © FileInfo.com</span>
<span style="left:657.50px;top:441.30px;font:normal normal 6.6px/10px 'Liberation Sans', sans-serif;color:#666;letter-spacing:-0.120px;transform:scaleX(0.8100);transform-origin:0 50%;">80%</span>
<span style="left:581.40px;top:439.80px;font:normal normal 8px/12px 'Liberation Sans', sans-serif;color:#555;">-</span>
<span style="left:645.60px;top:440.20px;font:normal normal 8px/12px 'Liberation Sans', sans-serif;color:#555;">+</span>
<span style="left:46.91px;top:115.60px;font:normal normal 7.6px/11px 'Liberation Sans', sans-serif;color:#666;">B</span>
<span style="left:96.56px;top:115.60px;font:normal normal 7.6px/11px 'Liberation Sans', sans-serif;color:#666;">C</span>
<span style="left:131.76px;top:115.60px;font:normal normal 7.6px/11px 'Liberation Sans', sans-serif;color:#666;">D</span>
<span style="left:175.61px;top:115.60px;font:normal normal 7.6px/11px 'Liberation Sans', sans-serif;color:#666;">E</span>
<span style="left:219.98px;top:115.60px;font:normal normal 7.6px/11px 'Liberation Sans', sans-serif;color:#666;">F</span>
<span style="left:271.69px;top:115.60px;font:normal normal 7.6px/11px 'Liberation Sans', sans-serif;color:#2a6244;">G</span>
<span style="left:340.76px;top:115.60px;font:normal normal 7.6px/11px 'Liberation Sans', sans-serif;color:#666;">H</span>
<span style="left:410.94px;top:115.60px;font:normal normal 7.6px/11px 'Liberation Sans', sans-serif;color:#666;">I</span>
<span style="left:478.10px;top:115.60px;font:normal normal 7.6px/11px 'Liberation Sans', sans-serif;color:#666;">J</span>
<span style="left:546.16px;top:115.60px;font:normal normal 7.6px/11px 'Liberation Sans', sans-serif;color:#666;">K</span>
<span style="left:607.33px;top:115.60px;font:normal normal 7.6px/11px 'Liberation Sans', sans-serif;color:#666;">L</span>
<span style="left:7.06px;top:130.70px;font:normal normal 7.7px/11px 'Liberation Sans', sans-serif;color:#555;">4</span>
<span style="left:7.06px;top:150.10px;font:normal normal 7.7px/11px 'Liberation Sans', sans-serif;color:#555;">5</span>
<span style="left:7.06px;top:164.10px;font:normal normal 7.7px/11px 'Liberation Sans', sans-serif;color:#555;">6</span>
<span style="left:7.06px;top:181.70px;font:normal normal 7.7px/11px 'Liberation Sans', sans-serif;color:#555;">7</span>
<span style="left:7.06px;top:192.10px;font:normal normal 7.7px/11px 'Liberation Sans', sans-serif;color:#555;">8</span>
<span style="left:7.06px;top:206.90px;font:normal normal 7.7px/11px 'Liberation Sans', sans-serif;color:#555;">9</span>
<span style="left:4.92px;top:225.20px;font:normal normal 7.7px/11px 'Liberation Sans', sans-serif;color:#555;">10</span>
<span style="left:5.21px;top:234.60px;font:normal normal 7.7px/11px 'Liberation Sans', sans-serif;color:#555;">11</span>
<span style="left:4.92px;top:252.20px;font:normal normal 7.7px/11px 'Liberation Sans', sans-serif;color:#555;">12</span>
<span style="left:4.92px;top:270.42px;font:normal normal 7.7px/11px 'Liberation Sans', sans-serif;color:#555;">13</span>
<span style="left:4.92px;top:288.64px;font:normal normal 7.7px/11px 'Liberation Sans', sans-serif;color:#555;">14</span>
<span style="left:4.92px;top:306.86px;font:normal normal 7.7px/11px 'Liberation Sans', sans-serif;color:#555;">15</span>
<span style="left:4.92px;top:325.08px;font:normal normal 7.7px/11px 'Liberation Sans', sans-serif;color:#555;">16</span>
<span style="left:4.92px;top:343.30px;font:normal normal 7.7px/11px 'Liberation Sans', sans-serif;color:#555;">17</span>
<span style="left:4.92px;top:361.52px;font:normal normal 7.7px/11px 'Liberation Sans', sans-serif;color:#555;">18</span>
<span style="left:4.92px;top:379.74px;font:normal normal 7.7px/11px 'Liberation Sans', sans-serif;color:#555;">19</span>
<span style="left:4.92px;top:397.96px;font:normal normal 7.7px/11px 'Liberation Sans', sans-serif;color:#555;">20</span>
<span style="left:4.92px;top:416.18px;font:normal normal 7.7px/11px 'Liberation Sans', sans-serif;color:#555;">21</span>
<span style="left:25.00px;top:126.20px;font:normal bold 9.7px/14px 'Liberation Serif', serif;color:#ffffff;letter-spacing:0.012px;-webkit-text-stroke:0.18px #ffffff;">Activity Level</span>
<span style="left:317.50px;top:126.20px;font:normal bold 9.7px/14px 'Liberation Serif', serif;color:#ffffff;letter-spacing:0.154px;-webkit-text-stroke:0.18px #ffffff;">Measurement System</span>
<span style="left:455.00px;top:126.20px;font:normal bold 9.7px/14px 'Liberation Serif', serif;color:#ffffff;letter-spacing:-0.120px;transform:scaleX(0.9997);transform-origin:0 50%;-webkit-text-stroke:0.18px #ffffff;">Current Weight</span>
<span style="left:592.20px;top:126.20px;font:normal bold 9.7px/14px 'Liberation Serif', serif;color:#ffffff;letter-spacing:-0.120px;transform:scaleX(0.9811);transform-origin:0 50%;-webkit-text-stroke:0.18px #ffffff;">Age</span>
<span style="left:25.00px;top:159.60px;font:normal bold 9.7px/14px 'Liberation Serif', serif;color:#ffffff;letter-spacing:-0.073px;-webkit-text-stroke:0.18px #ffffff;">I Want my Weight to</span>
<span style="left:317.50px;top:159.60px;font:normal bold 9.7px/14px 'Liberation Serif', serif;color:#ffffff;letter-spacing:-0.098px;-webkit-text-stroke:0.18px #ffffff;">Height in m</span>
<span style="left:386.00px;top:159.60px;font:normal bold 9.7px/14px 'Liberation Serif', serif;color:#ffffff;letter-spacing:0.192px;-webkit-text-stroke:0.18px #ffffff;">Centimeters</span>
<span style="left:455.00px;top:159.60px;font:normal bold 9.7px/14px 'Liberation Serif', serif;color:#ffffff;letter-spacing:-0.027px;-webkit-text-stroke:0.18px #ffffff;">Goal Weight</span>
<span style="left:592.50px;top:159.60px;font:normal bold 9.7px/14px 'Liberation Serif', serif;color:#ffffff;letter-spacing:-0.044px;-webkit-text-stroke:0.18px #ffffff;">Gender</span>
<span style="left:25.00px;top:144.20px;font:normal normal 7.8px/11px 'Liberation Sans', sans-serif;color:#3a4850;letter-spacing:0.075px;">Extra Active</span>
<span style="left:118.30px;top:144.20px;font:normal normal 7.8px/11px 'Liberation Sans', sans-serif;color:#3a4850;letter-spacing:0.052px;">Exercise 6-7 Days/Week + Physical Job/2x Training</span>
<span style="left:317.50px;top:144.20px;font:normal normal 7.8px/11px 'Liberation Sans', sans-serif;color:#3a4850;letter-spacing:0.113px;">Metric</span>
<span style="left:455.00px;top:144.20px;font:normal normal 7.8px/11px 'Liberation Sans', sans-serif;color:#3a4850;letter-spacing:0.154px;">95.0 kg</span>
<span style="left:592.30px;top:144.20px;font:normal normal 7.8px/11px 'Liberation Sans', sans-serif;color:#3a4850;letter-spacing:0.300px;">36</span>
<span style="left:25.00px;top:177.10px;font:normal normal 7.8px/11px 'Liberation Sans', sans-serif;color:#3a4850;letter-spacing:0.089px;">Decrease</span>
<span style="left:317.50px;top:177.10px;font:normal normal 7.8px/11px 'Liberation Sans', sans-serif;color:#3a4850;letter-spacing:-0.120px;transform:scaleX(0.9895);transform-origin:0 50%;">1.83 m</span>
<span style="left:386.00px;top:177.10px;font:normal normal 7.8px/11px 'Liberation Sans', sans-serif;color:#3a4850;letter-spacing:-0.120px;transform:scaleX(0.9769);transform-origin:0 50%;">183 cm</span>
<span style="left:455.00px;top:177.10px;font:normal normal 7.8px/11px 'Liberation Sans', sans-serif;color:#3a4850;letter-spacing:0.154px;">75.0 kg</span>
<span style="left:592.30px;top:177.10px;font:normal normal 7.8px/11px 'Liberation Sans', sans-serif;color:#3a4850;letter-spacing:-0.120px;transform:scaleX(0.9368);transform-origin:0 50%;">Male</span>
<span style="left:26.00px;top:201.80px;font:normal bold 9.7px/14px 'Liberation Serif', serif;color:#2c4812;letter-spacing:-0.120px;transform:scaleX(0.9932);transform-origin:0 50%;-webkit-text-stroke:0.18px #2c4812;">Goal Start Date</span>
<span style="left:161.00px;top:201.80px;font:normal bold 9.7px/14px 'Liberation Serif', serif;color:#2c4812;letter-spacing:0.097px;-webkit-text-stroke:0.18px #2c4812;">Goal Target Date</span>
<span style="left:317.50px;top:201.80px;font:normal bold 9.7px/14px 'Liberation Serif', serif;color:#2c4812;letter-spacing:0.094px;-webkit-text-stroke:0.18px #2c4812;">Initial Daily Calorie Needs</span>
<span style="left:455.00px;top:201.80px;font:normal bold 9.7px/14px 'Liberation Serif', serif;color:#2c4812;letter-spacing:0.010px;-webkit-text-stroke:0.18px #2c4812;">Initial Daily Calorie Intake</span>
<span style="left:592.50px;top:201.80px;font:normal bold 9.7px/14px 'Liberation Serif', serif;color:#2c4812;letter-spacing:-0.093px;-webkit-text-stroke:0.18px #2c4812;">Calories to Burn</span>
<span style="left:25.00px;top:219.70px;font:normal normal 7.8px/11px 'Liberation Sans', sans-serif;color:#4d4d4d;letter-spacing:0.477px;">7/28/2019</span>
<span style="left:161.00px;top:219.70px;font:normal normal 7.8px/11px 'Liberation Sans', sans-serif;color:#4d4d4d;letter-spacing:0.520px;">6/3/2020</span>
<span style="left:317.50px;top:219.70px;font:normal normal 7.8px/11px 'Liberation Sans', sans-serif;color:#4d4d4d;letter-spacing:0.047px;">3889</span>
<span style="left:455.00px;top:219.70px;font:normal normal 7.8px/11px 'Liberation Sans', sans-serif;color:#4d4d4d;letter-spacing:0.047px;">3389</span>
<span style="left:592.50px;top:219.70px;font:normal normal 7.8px/11px 'Liberation Sans', sans-serif;color:#4d4d4d;letter-spacing:-0.006px;">154000</span>
<span style="left:40.45px;top:247.00px;font:normal bold 8.6px/12px 'Liberation Serif', serif;color:#28551d;letter-spacing:0.271px;-webkit-text-stroke:0.18px #28551d;">Date</span>
<span style="left:87.55px;top:247.00px;font:normal bold 8.6px/12px 'Liberation Serif', serif;color:#28551d;letter-spacing:0.990px;-webkit-text-stroke:0.18px #28551d;">Week</span>
<span style="left:127.00px;top:247.00px;font:normal bold 8.6px/12px 'Liberation Serif', serif;color:#28551d;letter-spacing:0.094px;-webkit-text-stroke:0.18px #28551d;">Day</span>
<span style="left:163.75px;top:247.00px;font:normal bold 8.6px/12px 'Liberation Serif', serif;color:#28551d;letter-spacing:0.507px;-webkit-text-stroke:0.18px #28551d;">Weight</span>
<span style="left:213.65px;top:247.50px;font:normal bold 7.9px/11px 'Liberation Serif', serif;color:#28551d;letter-spacing:-0.120px;transform:scaleX(0.9515);transform-origin:0 50%;-webkit-text-stroke:0.18px #28551d;">BMR</span>
<span style="left:245.65px;top:247.00px;font:normal bold 8.6px/12px 'Liberation Serif', serif;color:#28551d;letter-spacing:0.345px;-webkit-text-stroke:0.18px #28551d;">Cal Consumed</span>
<span style="left:321.25px;top:247.00px;font:normal bold 8.6px/12px 'Liberation Serif', serif;color:#28551d;letter-spacing:0.194px;-webkit-text-stroke:0.18px #28551d;">Cal Burned</span>
<span style="left:391.00px;top:247.00px;font:normal bold 8.6px/12px 'Liberation Serif', serif;color:#28551d;letter-spacing:0.263px;-webkit-text-stroke:0.18px #28551d;">Cal Deficit</span>
<span style="left:450.75px;top:247.00px;font:normal bold 8.6px/12px 'Liberation Serif', serif;color:#28551d;letter-spacing:0.279px;-webkit-text-stroke:0.18px #28551d;">Cal Remaining</span>
<span style="left:518.70px;top:247.00px;font:normal bold 8.6px/12px 'Liberation Serif', serif;color:#28551d;letter-spacing:0.284px;-webkit-text-stroke:0.18px #28551d;">Kgs Remaining</span>
<span style="left:600.95px;top:247.00px;font:normal bold 8.6px/12px 'Liberation Serif', serif;color:#28551d;letter-spacing:0.094px;-webkit-text-stroke:0.18px #28551d;">Loss</span>
<span style="left:651.00px;top:247.00px;font:normal bold 8.6px/12px 'Liberation Serif', serif;color:#28551d;-webkit-text-stroke:0.18px #28551d;width:16.60px;overflow:hidden;">% of Goal</span>
<span style="left:41.75px;top:265.51px;font:normal normal 7.8px/11px 'Liberation Sans', sans-serif;color:#4d4d4d;letter-spacing:0.420px;">7/28/2019</span>
<span style="left:97.13px;top:265.51px;font:normal normal 7.8px/11px 'Liberation Sans', sans-serif;color:#4d4d4d;letter-spacing:0.420px;">1</span>
<span style="left:132.33px;top:265.51px;font:normal normal 7.8px/11px 'Liberation Sans', sans-serif;color:#4d4d4d;letter-spacing:0.420px;">1</span>
<span style="left:169.93px;top:265.51px;font:normal normal 7.8px/11px 'Liberation Sans', sans-serif;color:#4d4d4d;letter-spacing:0.420px;">95.0</span>
<span style="left:212.99px;top:265.51px;font:normal normal 7.8px/11px 'Liberation Sans', sans-serif;color:#4d4d4d;letter-spacing:0.420px;">2047</span>
<span style="left:265.34px;top:265.51px;font:normal normal 7.8px/11px 'Liberation Sans', sans-serif;color:#4d4d4d;letter-spacing:0.420px;">3389</span>
<span style="left:334.19px;top:265.51px;font:normal normal 7.8px/11px 'Liberation Sans', sans-serif;color:#4d4d4d;letter-spacing:0.420px;">3889</span>
<span style="left:405.07px;top:265.51px;font:normal normal 7.8px/11px 'Liberation Sans', sans-serif;color:#4d4d4d;letter-spacing:0.420px;">500</span>
<span style="left:465.93px;top:265.51px;font:normal normal 7.8px/11px 'Liberation Sans', sans-serif;color:#4d4d4d;letter-spacing:0.420px;">154000</span>
<span style="left:540.48px;top:265.51px;font:normal normal 7.8px/11px 'Liberation Sans', sans-serif;color:#4d4d4d;letter-spacing:0.420px;">20.0</span>
<span style="left:601.23px;top:265.51px;font:normal normal 7.8px/11px 'Liberation Sans', sans-serif;color:#4d4d4d;letter-spacing:0.420px;">0.00</span>
<span style="left:665.40px;top:265.51px;font:normal normal 7.8px/11px 'Liberation Sans', sans-serif;color:#4d4d4d;letter-spacing:0.420px;width:2.20px;overflow:hidden;">0.0%</span>
<span style="left:41.75px;top:283.73px;font:normal normal 7.8px/11px 'Liberation Sans', sans-serif;color:#4d4d4d;letter-spacing:0.420px;">7/29/2019</span>
<span style="left:132.33px;top:283.73px;font:normal normal 7.8px/11px 'Liberation Sans', sans-serif;color:#4d4d4d;letter-spacing:0.420px;">2</span>
<span style="left:169.93px;top:283.73px;font:normal normal 7.8px/11px 'Liberation Sans', sans-serif;color:#4d4d4d;letter-spacing:0.420px;">94.9</span>
<span style="left:212.99px;top:283.73px;font:normal normal 7.8px/11px 'Liberation Sans', sans-serif;color:#4d4d4d;letter-spacing:0.420px;">2045</span>
<span style="left:265.34px;top:283.73px;font:normal normal 7.8px/11px 'Liberation Sans', sans-serif;color:#4d4d4d;letter-spacing:0.420px;">3389</span>
<span style="left:334.19px;top:283.73px;font:normal normal 7.8px/11px 'Liberation Sans', sans-serif;color:#4d4d4d;letter-spacing:0.420px;">3885</span>
<span style="left:405.07px;top:283.73px;font:normal normal 7.8px/11px 'Liberation Sans', sans-serif;color:#4d4d4d;letter-spacing:0.420px;">496</span>
<span style="left:465.93px;top:283.73px;font:normal normal 7.8px/11px 'Liberation Sans', sans-serif;color:#4d4d4d;letter-spacing:0.420px;">153504</span>
<span style="left:540.48px;top:283.73px;font:normal normal 7.8px/11px 'Liberation Sans', sans-serif;color:#4d4d4d;letter-spacing:0.420px;">19.9</span>
<span style="left:601.23px;top:283.73px;font:normal normal 7.8px/11px 'Liberation Sans', sans-serif;color:#4d4d4d;letter-spacing:0.420px;">0.06</span>
<span style="left:665.40px;top:283.73px;font:normal normal 7.8px/11px 'Liberation Sans', sans-serif;color:#4d4d4d;letter-spacing:0.420px;width:2.20px;overflow:hidden;">0.0%</span>
<span style="left:41.75px;top:301.95px;font:normal normal 7.8px/11px 'Liberation Sans', sans-serif;color:#4d4d4d;letter-spacing:0.420px;">7/30/2019</span>
<span style="left:132.33px;top:301.95px;font:normal normal 7.8px/11px 'Liberation Sans', sans-serif;color:#4d4d4d;letter-spacing:0.420px;">3</span>
<span style="left:169.93px;top:301.95px;font:normal normal 7.8px/11px 'Liberation Sans', sans-serif;color:#4d4d4d;letter-spacing:0.420px;">94.7</span>
<span style="left:212.99px;top:301.95px;font:normal normal 7.8px/11px 'Liberation Sans', sans-serif;color:#4d4d4d;letter-spacing:0.420px;">2043</span>
<span style="left:265.34px;top:301.95px;font:normal normal 7.8px/11px 'Liberation Sans', sans-serif;color:#4d4d4d;letter-spacing:0.420px;">3385</span>
<span style="left:334.19px;top:301.95px;font:normal normal 7.8px/11px 'Liberation Sans', sans-serif;color:#4d4d4d;letter-spacing:0.420px;">3882</span>
<span style="left:405.07px;top:301.95px;font:normal normal 7.8px/11px 'Liberation Sans', sans-serif;color:#4d4d4d;letter-spacing:0.420px;">496</span>
<span style="left:465.93px;top:301.95px;font:normal normal 7.8px/11px 'Liberation Sans', sans-serif;color:#4d4d4d;letter-spacing:0.420px;">153007</span>
<span style="left:540.48px;top:301.95px;font:normal normal 7.8px/11px 'Liberation Sans', sans-serif;color:#4d4d4d;letter-spacing:0.420px;">19.9</span>
<span style="left:601.23px;top:301.95px;font:normal normal 7.8px/11px 'Liberation Sans', sans-serif;color:#4d4d4d;letter-spacing:0.420px;">0.13</span>
<span style="left:665.40px;top:301.95px;font:normal normal 7.8px/11px 'Liberation Sans', sans-serif;color:#4d4d4d;letter-spacing:0.420px;width:2.20px;overflow:hidden;">0.1%</span>
<span style="left:41.75px;top:320.17px;font:normal normal 7.8px/11px 'Liberation Sans', sans-serif;color:#4d4d4d;letter-spacing:0.420px;">7/31/2019</span>
<span style="left:132.33px;top:320.17px;font:normal normal 7.8px/11px 'Liberation Sans', sans-serif;color:#4d4d4d;letter-spacing:0.420px;">4</span>
<span style="left:169.93px;top:320.17px;font:normal normal 7.8px/11px 'Liberation Sans', sans-serif;color:#4d4d4d;letter-spacing:0.420px;">94.6</span>
<span style="left:212.99px;top:320.17px;font:normal normal 7.8px/11px 'Liberation Sans', sans-serif;color:#4d4d4d;letter-spacing:0.420px;">2041</span>
<span style="left:265.34px;top:320.17px;font:normal normal 7.8px/11px 'Liberation Sans', sans-serif;color:#4d4d4d;letter-spacing:0.420px;">3382</span>
<span style="left:334.19px;top:320.17px;font:normal normal 7.8px/11px 'Liberation Sans', sans-serif;color:#4d4d4d;letter-spacing:0.420px;">3878</span>
<span style="left:405.07px;top:320.17px;font:normal normal 7.8px/11px 'Liberation Sans', sans-serif;color:#4d4d4d;letter-spacing:0.420px;">496</span>
<span style="left:466.22px;top:320.17px;font:normal normal 7.8px/11px 'Liberation Sans', sans-serif;color:#4d4d4d;letter-spacing:0.420px;">152511</span>
<span style="left:540.48px;top:320.17px;font:normal normal 7.8px/11px 'Liberation Sans', sans-serif;color:#4d4d4d;letter-spacing:0.420px;">19.8</span>
<span style="left:601.23px;top:320.17px;font:normal normal 7.8px/11px 'Liberation Sans', sans-serif;color:#4d4d4d;letter-spacing:0.420px;">0.19</span>
<span style="left:665.40px;top:320.17px;font:normal normal 7.8px/11px 'Liberation Sans', sans-serif;color:#4d4d4d;letter-spacing:0.420px;width:2.20px;overflow:hidden;">0.1%</span>
<span style="left:46.50px;top:338.39px;font:normal normal 7.8px/11px 'Liberation Sans', sans-serif;color:#4d4d4d;letter-spacing:0.420px;">8/1/2019</span>
<span style="left:132.33px;top:338.39px;font:normal normal 7.8px/11px 'Liberation Sans', sans-serif;color:#4d4d4d;letter-spacing:0.420px;">5</span>
<span style="left:169.93px;top:338.39px;font:normal normal 7.8px/11px 'Liberation Sans', sans-serif;color:#4d4d4d;letter-spacing:0.420px;">94.4</span>
<span style="left:212.99px;top:338.39px;font:normal normal 7.8px/11px 'Liberation Sans', sans-serif;color:#4d4d4d;letter-spacing:0.420px;">2039</span>
<span style="left:265.34px;top:338.39px;font:normal normal 7.8px/11px 'Liberation Sans', sans-serif;color:#4d4d4d;letter-spacing:0.420px;">3378</span>
<span style="left:334.19px;top:338.39px;font:normal normal 7.8px/11px 'Liberation Sans', sans-serif;color:#4d4d4d;letter-spacing:0.420px;">3874</span>
<span style="left:405.07px;top:338.39px;font:normal normal 7.8px/11px 'Liberation Sans', sans-serif;color:#4d4d4d;letter-spacing:0.420px;">496</span>
<span style="left:465.93px;top:338.39px;font:normal normal 7.8px/11px 'Liberation Sans', sans-serif;color:#4d4d4d;letter-spacing:0.420px;">152015</span>
<span style="left:540.48px;top:338.39px;font:normal normal 7.8px/11px 'Liberation Sans', sans-serif;color:#4d4d4d;letter-spacing:0.420px;">19.7</span>
<span style="left:601.23px;top:338.39px;font:normal normal 7.8px/11px 'Liberation Sans', sans-serif;color:#4d4d4d;letter-spacing:0.420px;">0.26</span>
<span style="left:665.40px;top:338.39px;font:normal normal 7.8px/11px 'Liberation Sans', sans-serif;color:#4d4d4d;letter-spacing:0.420px;width:2.20px;overflow:hidden;">0.2%</span>
<span style="left:46.50px;top:356.61px;font:normal normal 7.8px/11px 'Liberation Sans', sans-serif;color:#4d4d4d;letter-spacing:0.420px;">8/2/2019</span>
<span style="left:132.33px;top:356.61px;font:normal normal 7.8px/11px 'Liberation Sans', sans-serif;color:#4d4d4d;letter-spacing:0.420px;">6</span>
<span style="left:169.93px;top:356.61px;font:normal normal 7.8px/11px 'Liberation Sans', sans-serif;color:#4d4d4d;letter-spacing:0.420px;">94.3</span>
<span style="left:212.99px;top:356.61px;font:normal normal 7.8px/11px 'Liberation Sans', sans-serif;color:#4d4d4d;letter-spacing:0.420px;">2037</span>
<span style="left:265.34px;top:356.61px;font:normal normal 7.8px/11px 'Liberation Sans', sans-serif;color:#4d4d4d;letter-spacing:0.420px;">3374</span>
<span style="left:334.19px;top:356.61px;font:normal normal 7.8px/11px 'Liberation Sans', sans-serif;color:#4d4d4d;letter-spacing:0.420px;">3871</span>
<span style="left:405.07px;top:356.61px;font:normal normal 7.8px/11px 'Liberation Sans', sans-serif;color:#4d4d4d;letter-spacing:0.420px;">496</span>
<span style="left:465.93px;top:356.61px;font:normal normal 7.8px/11px 'Liberation Sans', sans-serif;color:#4d4d4d;letter-spacing:0.420px;">151518</span>
<span style="left:540.48px;top:356.61px;font:normal normal 7.8px/11px 'Liberation Sans', sans-serif;color:#4d4d4d;letter-spacing:0.420px;">19.7</span>
<span style="left:601.23px;top:356.61px;font:normal normal 7.8px/11px 'Liberation Sans', sans-serif;color:#4d4d4d;letter-spacing:0.420px;">0.32</span>
<span style="left:665.40px;top:356.61px;font:normal normal 7.8px/11px 'Liberation Sans', sans-serif;color:#4d4d4d;letter-spacing:0.420px;width:2.20px;overflow:hidden;">0.2%</span>
<span style="left:46.50px;top:374.83px;font:normal normal 7.8px/11px 'Liberation Sans', sans-serif;color:#4d4d4d;letter-spacing:0.420px;">8/3/2019</span>
<span style="left:132.33px;top:374.83px;font:normal normal 7.8px/11px 'Liberation Sans', sans-serif;color:#4d4d4d;letter-spacing:0.420px;">7</span>
<span style="left:169.93px;top:374.83px;font:normal normal 7.8px/11px 'Liberation Sans', sans-serif;color:#4d4d4d;letter-spacing:0.420px;">94.1</span>
<span style="left:212.99px;top:374.83px;font:normal normal 7.8px/11px 'Liberation Sans', sans-serif;color:#4d4d4d;letter-spacing:0.420px;">2035</span>
<span style="left:265.34px;top:374.83px;font:normal normal 7.8px/11px 'Liberation Sans', sans-serif;color:#4d4d4d;letter-spacing:0.420px;">3371</span>
<span style="left:334.19px;top:374.83px;font:normal normal 7.8px/11px 'Liberation Sans', sans-serif;color:#4d4d4d;letter-spacing:0.420px;">3867</span>
<span style="left:405.07px;top:374.83px;font:normal normal 7.8px/11px 'Liberation Sans', sans-serif;color:#4d4d4d;letter-spacing:0.420px;">496</span>
<span style="left:465.93px;top:374.83px;font:normal normal 7.8px/11px 'Liberation Sans', sans-serif;color:#4d4d4d;letter-spacing:0.420px;">151022</span>
<span style="left:540.48px;top:374.83px;font:normal normal 7.8px/11px 'Liberation Sans', sans-serif;color:#4d4d4d;letter-spacing:0.420px;">19.6</span>
<span style="left:601.23px;top:374.83px;font:normal normal 7.8px/11px 'Liberation Sans', sans-serif;color:#4d4d4d;letter-spacing:0.420px;">0.39</span>
<span style="left:665.40px;top:374.83px;font:normal normal 7.8px/11px 'Liberation Sans', sans-serif;color:#4d4d4d;letter-spacing:0.420px;width:2.20px;overflow:hidden;">0.3%</span>
<span style="left:46.50px;top:393.05px;font:normal normal 7.8px/11px 'Liberation Sans', sans-serif;color:#4d4d4d;letter-spacing:0.420px;">8/4/2019</span>
<span style="left:97.13px;top:393.05px;font:normal normal 7.8px/11px 'Liberation Sans', sans-serif;color:#4d4d4d;letter-spacing:0.420px;">2</span>
<span style="left:132.33px;top:393.05px;font:normal normal 7.8px/11px 'Liberation Sans', sans-serif;color:#4d4d4d;letter-spacing:0.420px;">8</span>
<span style="left:169.93px;top:393.05px;font:normal normal 7.8px/11px 'Liberation Sans', sans-serif;color:#4d4d4d;letter-spacing:0.420px;">94.0</span>
<span style="left:212.99px;top:393.05px;font:normal normal 7.8px/11px 'Liberation Sans', sans-serif;color:#4d4d4d;letter-spacing:0.420px;">2033</span>
<span style="left:265.34px;top:393.05px;font:normal normal 7.8px/11px 'Liberation Sans', sans-serif;color:#4d4d4d;letter-spacing:0.420px;">3367</span>
<span style="left:334.19px;top:393.05px;font:normal normal 7.8px/11px 'Liberation Sans', sans-serif;color:#4d4d4d;letter-spacing:0.420px;">3863</span>
<span style="left:405.07px;top:393.05px;font:normal normal 7.8px/11px 'Liberation Sans', sans-serif;color:#4d4d4d;letter-spacing:0.420px;">496</span>
<span style="left:465.93px;top:393.05px;font:normal normal 7.8px/11px 'Liberation Sans', sans-serif;color:#4d4d4d;letter-spacing:0.420px;">150526</span>
<span style="left:540.48px;top:393.05px;font:normal normal 7.8px/11px 'Liberation Sans', sans-serif;color:#4d4d4d;letter-spacing:0.420px;">19.5</span>
<span style="left:601.23px;top:393.05px;font:normal normal 7.8px/11px 'Liberation Sans', sans-serif;color:#4d4d4d;letter-spacing:0.420px;">0.45</span>
<span style="left:665.40px;top:393.05px;font:normal normal 7.8px/11px 'Liberation Sans', sans-serif;color:#4d4d4d;letter-spacing:0.420px;width:2.20px;overflow:hidden;">0.3%</span>
<span style="left:46.50px;top:411.27px;font:normal normal 7.8px/11px 'Liberation Sans', sans-serif;color:#4d4d4d;letter-spacing:0.420px;">8/5/2019</span>
<span style="left:132.33px;top:411.27px;font:normal normal 7.8px/11px 'Liberation Sans', sans-serif;color:#4d4d4d;letter-spacing:0.420px;">9</span>
<span style="left:169.93px;top:411.27px;font:normal normal 7.8px/11px 'Liberation Sans', sans-serif;color:#4d4d4d;letter-spacing:0.420px;">93.9</span>
<span style="left:212.99px;top:411.27px;font:normal normal 7.8px/11px 'Liberation Sans', sans-serif;color:#4d4d4d;letter-spacing:0.420px;">2031</span>
<span style="left:265.34px;top:411.27px;font:normal normal 7.8px/11px 'Liberation Sans', sans-serif;color:#4d4d4d;letter-spacing:0.420px;">3363</span>
<span style="left:334.19px;top:411.27px;font:normal normal 7.8px/11px 'Liberation Sans', sans-serif;color:#4d4d4d;letter-spacing:0.420px;">3859</span>
<span style="left:405.07px;top:411.27px;font:normal normal 7.8px/11px 'Liberation Sans', sans-serif;color:#4d4d4d;letter-spacing:0.420px;">496</span>
<span style="left:465.93px;top:411.27px;font:normal normal 7.8px/11px 'Liberation Sans', sans-serif;color:#4d4d4d;letter-spacing:0.420px;">150030</span>
<span style="left:540.48px;top:411.27px;font:normal normal 7.8px/11px 'Liberation Sans', sans-serif;color:#4d4d4d;letter-spacing:0.420px;">19.5</span>
<span style="left:601.23px;top:411.27px;font:normal normal 7.8px/11px 'Liberation Sans', sans-serif;color:#4d4d4d;letter-spacing:0.420px;">0.52</span>
<span style="left:665.40px;top:411.27px;font:normal normal 7.8px/11px 'Liberation Sans', sans-serif;color:#4d4d4d;letter-spacing:0.420px;width:2.20px;overflow:hidden;">0.3%</span>
<span style="left:55.60px;top:4.70px;font:normal bold 6.6px/10px 'Liberation Sans', sans-serif;color:#fff;letter-spacing:-0.120px;transform:scaleX(0.9471);transform-origin:0 50%;">Off</span>
<span style="left:228.60px;top:42.90px;font:normal normal 6.2px/9px 'Liberation Sans', sans-serif;color:#555;">ab</span>
<span style="left:343.60px;top:61.20px;font:normal normal 4.6px/8px 'Liberation Sans', sans-serif;color:#666;">.0</span>
<span style="left:341.20px;top:65.60px;font:normal normal 4.6px/8px 'Liberation Sans', sans-serif;color:#666;">.00</span>
<span style="left:354.00px;top:61.20px;font:normal normal 4.6px/8px 'Liberation Sans', sans-serif;color:#666;">.00</span>
<span style="left:356.40px;top:65.60px;font:normal normal 4.6px/8px 'Liberation Sans', sans-serif;color:#666;">.0</span>
</div></body></html>
